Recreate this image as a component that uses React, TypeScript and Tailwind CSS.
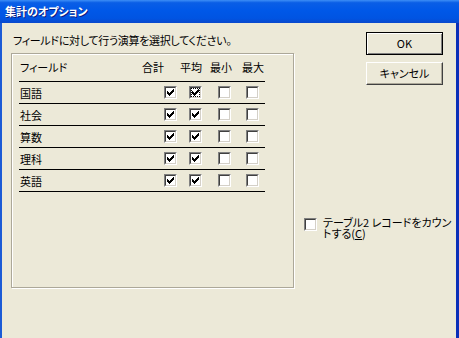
import type { FC } from "react";

const rows = ["国語", "社会", "算数", "理科", "英語"];

const Check: FC = () => (
	<svg width="7" height="7" viewBox="0 0 7 7" shapeRendering="crispEdges">
		<path
			d="M6 0h1v1h-1z M5 1h2v1h-2z M0 2h1v1h-1z M4 2h3v1h-3z M0 3h2v1h-2z M3 3h3v1h-3z M0 4h5v1h-5z M1 5h3v1h-3z M2 6h1v1h-1z"
			fill="#000"
		/>
	</svg>
);

interface BoxProps {
	checked?: boolean;
	focus?: boolean;
}

// classic sunken checkbox, 13x13
const Box: FC<BoxProps> = ({ checked, focus }) => (
	<span className="flex w-[13px] h-[13px] shrink-0 border border-t-[#808080] border-l-[#808080] border-b-white border-r-white">
		<span className="flex items-center justify-center w-full h-full bg-white border border-t-[#404040] border-l-[#404040] border-b-[#d4d0c8] border-r-[#d4d0c8]">
			{focus ? (
				<span className="flex items-center justify-center w-[9px] h-[9px] border border-dotted border-black">
					{checked && <Check />}
				</span>
			) : (
				checked && <Check />
			)}
		</span>
	</span>
);

export default function App() {
	return (
		<div className="w-[459px] h-[338px] flex flex-col overflow-hidden bg-[#ece9d8] font-['Noto_Sans_CJK_JP','Liberation_Sans',sans-serif] [font-feature-settings:'palt'] text-[11px] text-black">
			{/* Title bar */}
			<div className="h-[23px] shrink-0 flex items-center pl-[5px] bg-[linear-gradient(to_bottom,#3d8ef6_0%,#0a5ee6_12%,#0058e8_45%,#0054e2_80%,#0a48cc_100%)]">
				<span className="text-[11px] font-bold text-white leading-none [text-shadow:1px_1px_0_#0a1c82]">
					集計のオプション
				</span>
			</div>

			<div className="flex-1 flex border-l-2 border-l-[#1c5bd6] border-r-[3px] border-r-[#0a2fb8]">
				{/* Left column */}
				<div className="ml-[9px] mt-[10px] w-[283px] shrink-0 flex flex-col">
					<div className="h-[14px] leading-[14px] pl-[2px] whitespace-nowrap tracking-[-0.3px]">
						フィールドに対して行う演算を選択してください。
					</div>

					<div className="mt-[6px] h-[235px] border border-[#aca899] shadow-[1px_1px_0_#fff,inset_1px_1px_0_#fff] pt-[6px] pl-[7px]">
						<div className="w-[246px]">
							{/* Header */}
							<div className="h-[22px] border-b border-black flex items-start leading-[14px] whitespace-nowrap">
								<span className="w-[123px] pl-[1px]">フィールド</span>
								<span className="w-[38px]">合計</span>
								<span className="w-[30px]">平均</span>
								<span className="w-[32px]">最小</span>
								<span className="w-[23px]">最大</span>
							</div>

							{rows.map((name, i) => (
								<div
									key={name}
									className="h-[22px] border-b border-black flex items-center leading-[14px]"
								>
									<span className="w-[145px] pl-[1px]">{name}</span>
									<Box checked />
									<span className="w-[12px]" />
									<Box checked focus={i === 0} />
									<span className="w-[16px]" />
									<Box />
									<span className="w-[15px]" />
									<Box />
								</div>
							))}
						</div>
					</div>
				</div>

				{/* Right column */}
				<div className="flex-1 flex flex-col">
					<div className="ml-[72px] mt-[9px] flex flex-col gap-[7px]">
						<button className="w-[77px] h-[23px] flex items-center justify-center border border-black shadow-[inset_1px_1px_0_#fff,inset_-1px_-1px_0_#808080] bg-[#ece9d8] text-[11px] leading-none">
							OK
						</button>
						<button className="w-[77px] h-[23px] flex items-center justify-center border border-t-white border-l-white border-b-[#404040] border-r-[#404040] shadow-[inset_-1px_-1px_0_#aca899] bg-[#ece9d8] text-[11px] leading-none">
							キャンセル
						</button>
					</div>

					<div className="ml-[10px] mt-[132px] flex items-start gap-[6px]">
						<span className="mt-[1px]">
							<Box />
						</span>
						<div className="flex flex-col text-[11px] leading-[11px] whitespace-nowrap">
							<span>テーブル2 レコードをカウン</span>
							<span>
								トする(<span className="underline">C</span>)
							</span>
						</div>
					</div>
				</div>
			</div>
		</div>
	);
}
